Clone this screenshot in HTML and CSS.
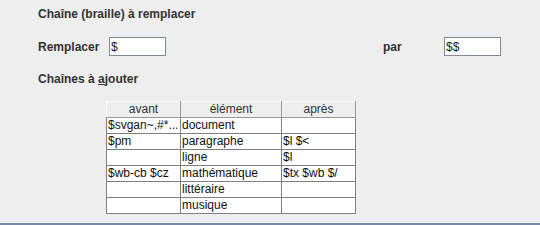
FILE: index.html
```html
<!DOCTYPE html>
<html lang="fr">
<head>
  <meta charset="UTF-8" />
  <title>Chaînes</title>
  <link rel="stylesheet" href="styles.css">
</head>
<body>
  <div class="panel">
    <div class="title">Chaîne (braille) à remplacer</div>

    <div class="replace-row">
      <label class="lbl lbl-from">Remplacer</label>
      <input type="text" class="field" value="$" />
      <label class="lbl lbl-to">par</label>
      <input type="text" class="field" value="$$" />
    </div>

    <div class="title add">Chaînes à <u>a</u>jouter</div>

    <table class="strings">
      <colgroup><col class="c1"><col class="c2"><col class="c3"></colgroup>
      <thead>
        <tr><th>avant</th><th>élément</th><th>après</th></tr>
      </thead>
      <tbody>
        <tr><td>$svgan~,#*...</td><td>document</td><td></td></tr>
        <tr><td>$pm</td><td>paragraphe</td><td>$l $&lt;</td></tr>
        <tr><td></td><td>ligne</td><td>$l</td></tr>
        <tr><td>$wb-cb $cz</td><td>mathématique</td><td>$tx $wb $/</td></tr>
        <tr><td></td><td>littéraire</td><td></td></tr>
        <tr><td></td><td>musique</td><td></td></tr>
      </tbody>
    </table>
  </div>
  <div class="bottom-line"></div>
</body>
</html>
```

FILE: styles.css
```css
body {
  margin: 0;
  background: #eeeeee;
  font-family: "Liberation Sans", Arial, sans-serif;
  font-size: 12px;
  color: #333;
  width: 540px;
  height: 225px;
  position: relative;
  overflow: hidden;
}

.panel {
  padding: 6px 0 0 38px;
}

.title {
  font-weight: bold;
  height: 16px;
  line-height: 16px;
}

.title.add {
  margin-top: 15px;
}

.replace-row {
  display: flex;
  align-items: center;
  margin-top: 15px;
  height: 19px;
}

.lbl {
  font-weight: bold;
}

.lbl-from { width: 71px; }
.lbl-to { width: 61px; margin-left: 217px; }

.field {
  width: 57px;
  height: 19px;
  box-sizing: border-box;
  border: 1px solid #7f8a95;
  background: #fff;
  font-family: "Liberation Sans", Arial, sans-serif;
  font-size: 12px;
  color: #222;
  padding: 0 1px;
  margin: 0;
}

.strings {
  margin: 14px 0 0 68px;
  border-collapse: collapse;
  table-layout: fixed;
  width: 249px;
  background: #fff;
  color: #111;
}

.c1 { width: 74px; }
.c2 { width: 101px; }
.c3 { width: 74px; }

.strings th {
  background: #eeeeee;
  font-weight: normal;
  color: #333;
  border-right: 1px solid #999;
  border-bottom: 1px solid #999;
  border-top: 1px solid #fff;
  height: 15px;
  padding: 0;
  line-height: 15px;
}

.strings th:first-child { border-left: 1px solid #fff; }

.strings td {
  border: 1px solid #808080;
  border-top: none;
  height: 15px;
  line-height: 15px;
  padding: 0 1px;
  white-space: nowrap;
  overflow: hidden;
}

.bottom-line {
  position: absolute;
  left: 0;
  right: 0;
  top: 223px;
  height: 2px;
  background: #7a89a8;
}
```
